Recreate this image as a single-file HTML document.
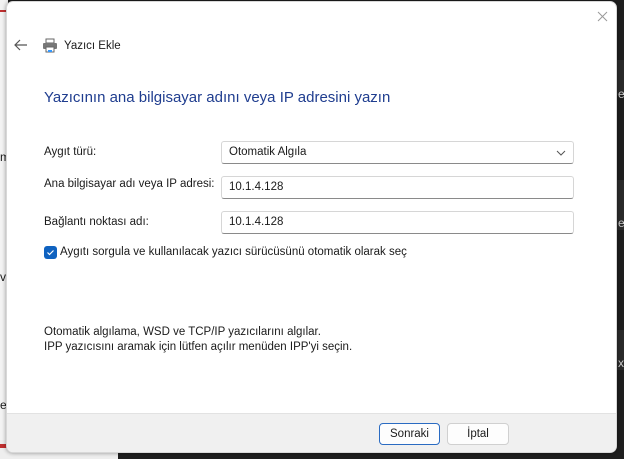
<!DOCTYPE html>
<html><head><meta charset="utf-8"><style>
*{margin:0;padding:0;box-sizing:border-box}
body{width:624px;height:459px;overflow:hidden;position:relative;background:#1e1e1e;font-family:"Liberation Sans",sans-serif;font-size:11.5px;color:#1a1a1a}
.abs{position:absolute}
.win{left:6px;top:1px;width:611px;height:452px;background:#fff;border-radius:7px;overflow:hidden;border:1px solid #d8d8d8;box-shadow:0 0 4px rgba(0,0,0,.4)}
.field{position:absolute;background:#fff;border:1px solid #d6d6d6;border-bottom:1px solid #8a8a8a;border-radius:3px;padding-left:7px;line-height:21px;height:23px}
.btn{position:absolute;top:421px;height:22px;border:1px solid #d0d0d0;border-radius:4px;background:#fdfdfd;text-align:center;line-height:20px}
</style></head><body>
<div class="abs" style="left:0;top:0;width:8px;height:459px;background:#f3f3f3"></div>
<div class="abs" style="left:0;top:440px;width:118px;height:19px;background:#eeeeee"></div>
<div class="abs" style="left:0;top:444px;width:8px;height:4px;background:#c03030"></div>
<div class="abs" style="left:0;top:10px;width:8px;height:2px;background:#c03030"></div>
<div class="abs" style="left:0;top:270px;font-size:12px">ve</div>
<div class="abs" style="left:0;top:398px;font-size:12px">es</div>
<div class="abs" style="left:0;top:150px;font-size:12px">m</div>
<div class="abs" style="left:617px;top:60px;width:7px;height:35px;background:#2a2a2a"></div>
<div class="abs" style="left:617px;top:180px;width:7px;height:50px;background:#2a2a2a"></div>
<div class="abs" style="left:617px;top:330px;width:7px;height:40px;background:#2a2a2a"></div>
<div class="abs" style="left:618px;top:87px;color:#ccc;font-size:12px">e</div>
<div class="abs" style="left:618px;top:216px;color:#ccc;font-size:12px">er</div>
<div class="abs" style="left:618px;top:356px;color:#ccc;font-size:12px">xt</div>
<div class="abs win">
 <svg class="abs" style="left:590px;top:9px" width="11" height="11"><path d="M1 1l9 9M10 1l-9 9" stroke="#999" stroke-width="1"/></svg>
 <svg class="abs" style="left:7px;top:37px" width="14" height="12"><path d="M13 6H1M6 1L1 6l5 5" stroke="#555" stroke-width="1.2" fill="none"/></svg>
 <svg class="abs" style="left:35px;top:36px" width="16" height="15"><rect x="4" y="1" width="8" height="4" fill="#fff" stroke="#666"/><rect x="1" y="5" width="14" height="6" rx="1" fill="#777"/><rect x="4" y="9" width="8" height="5" fill="#fff" stroke="#666"/><rect x="6" y="12" width="4" height="2" fill="#39f"/></svg>
 <div class="abs" style="left:57px;top:38px;font-size:11.5px">Yazıcı Ekle</div>
 <div class="abs" style="left:37px;top:87px;font-size:15px;color:#1f3d8f">Yazıcının ana bilgisayar adını veya IP adresini yazın</div>
 <div class="abs" style="left:37px;top:144px">Aygıt türü:</div>
 <div class="field" style="left:214px;top:139px;width:353px">Otomatik Algıla<svg class="abs" style="right:7px;top:8px" width="10" height="6"><path d="M1 1l4 4 4-4" stroke="#555" fill="none"/></svg></div>
 <div class="abs" style="left:37px;top:176px">Ana bilgisayar adı veya IP adresi:</div>
 <div class="field" style="left:214px;top:174px;width:353px">10.1.4.128</div>
 <div class="abs" style="left:37px;top:214px">Bağlantı noktası adı:</div>
 <div class="field" style="left:214px;top:209px;width:353px">10.1.4.128</div>
 <div class="abs" style="left:37px;top:244px;width:13px;height:13px;background:#0f62c0;border-radius:3px"><svg width="13" height="13"><path d="M3.5 6.5l2 2 4-4" stroke="#fff" stroke-width="1.2" fill="none"/></svg></div>
 <div class="abs" style="left:53px;top:244px">Aygıtı sorgula ve kullanılacak yazıcı sürücüsünü otomatik olarak seç</div>
 <div class="abs" style="left:37px;top:323px;line-height:15px">Otomatik algılama, WSD ve TCP/IP yazıcılarını algılar.<br>IPP yazıcısını aramak için lütfen açılır menüden IPP'yi seçin.</div>
 <div class="abs" style="left:0;top:411px;width:611px;height:41px;background:#f0f0f0;border-top:1px solid #e2e2e2"></div>
 <div class="btn" style="left:372px;width:61px;border:1px solid #2a6bc2">Sonraki</div>
 <div class="btn" style="left:440px;width:62px">İptal</div>
</div>
</body></html>
